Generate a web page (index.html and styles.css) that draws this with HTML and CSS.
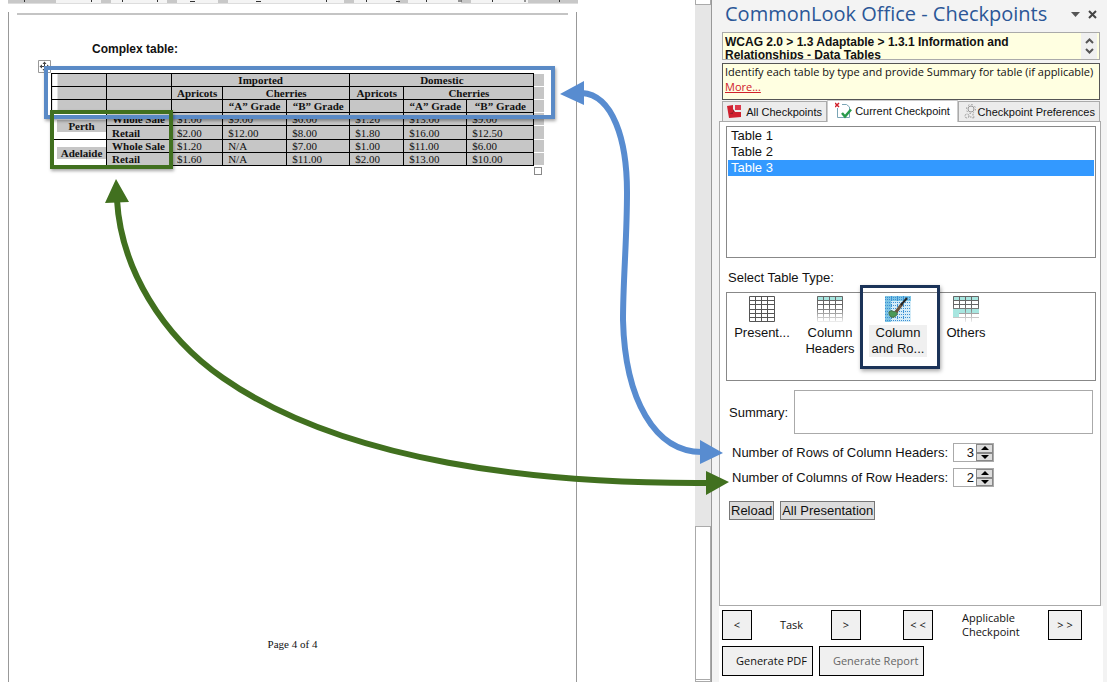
FILE: index.html
```
<!doctype html>
<html lang="en">
<head>
<meta charset="utf-8">
<title>CommonLook Office</title>
<link rel="stylesheet" href="styles.css">
</head>
<body>
<div class="app">

	<main class="doc">
		<svg class="strip" width="570" height="4">
			<path fill="#f4f4f4" d="M0 0h570v4H0z"/>
			<path fill="#c8c8c8" d="M0 0h48v3H0zM93 0h10v3H93zM159 0h10v3h-10zM210 0h10v3h-10zM336 0h10v3h-10zM390 0h10v3h-10zM453 0h10v3h-10zM520 0h50v3h-50z"/>
			<path stroke="#333" d="M16.500 0v2M83.500 0v2M114.500 0v2M149.500 0v2M318.500 0v2M358.500 0v2M418.500 0v2M484.500 0v2M551.500 0v2M182 1.500h5M248 1.500h5M388 1.500h4M450 1h4M516 1h2"/>
			<path stroke="#ddd" d="M0 3.500h570"/>
		</svg>
		<div class="page">
			<div class="rule"></div>
			<h1>Complex table:</h1>
			<div class="tableWrap">
				<svg class="moveHandle" width="13" height="13" viewBox="0 0 13 13">
					<path fill="#fff" stroke="#999" d="M.5.5h12v12H.5z"/>
					<path stroke="#444" d="M6.500 2v9M2 6.500h9"/>
					<path fill="#444" d="M4.500 4l2-2.500 2 2.500zM4.500 9l2 2.500 2-2.500zM4 4.500L1.500 6.500 4 8.500zM9 4.500l2.500 2L9 8.500z"/>
				</svg>
				<table class="prices">
					<colgroup><col class="c55"><col class="c65"><col class="c51"><col class="c64"><col class="c63"><col class="c54"><col class="c63"><col class="c67"><col class="c10"></colgroup>
					<tr><td class="first"></td><td></td><th colspan="3">Imported</th><th colspan="3">Domestic</th><td class="end"></td></tr>
					<tr><td class="first"></td><td></td><th>Apricots</th><th colspan="2">Cherries</th><th>Apricots</th><th colspan="2">Cherries</th><td class="end"></td></tr>
					<tr><td class="first"></td><td></td><td></td><th>“A” Grade</th><th>“B” Grade</th><td></td><th>“A” Grade</th><th>“B” Grade</th><td class="end"></td></tr>
					<tr><th class="group" rowspan="2"><span>Perth</span></th><th class="sub">Whole Sale</th><td>$1.00</td><td>$9.00</td><td>$6.00</td><td>$1.20</td><td>$13.00</td><td>$9.00</td><td class="end"></td></tr>
					<tr class="lastInGroup"><th class="sub">Retail</th><td>$2.00</td><td>$12.00</td><td>$8.00</td><td>$1.80</td><td>$16.00</td><td>$12.50</td><td class="end"></td></tr>
					<tr><th class="group" rowspan="2"><span>Adelaide</span></th><th class="sub">Whole Sale</th><td>$1.20</td><td>N/A</td><td>$7.00</td><td>$1.00</td><td>$11.00</td><td>$6.00</td><td class="end"></td></tr>
					<tr><th class="sub">Retail</th><td>$1.60</td><td>N/A</td><td>$11.00</td><td>$2.00</td><td>$13.00</td><td>$10.00</td><td class="end"></td></tr>
				</table>
				<div class="mark markBlue"></div>
				<div class="mark markGreen"></div>
				<div class="resizeHandle"></div>
			</div>
			<p class="pageNo">Page 4 of 4</p>
		</div>
	</main>

	<div class="scroll">
		<div class="scrollUp"></div>
		<div class="scrollThumb"></div>
		<div class="scrollDown"></div>
	</div>

	<aside class="panel">
		<header class="panelHead">
			<h2>CommonLook Office - Checkpoints</h2>
			<button class="headBtn" aria-label="Options"><svg width="9" height="5"><path fill="#555" d="M0 0h9L4.500 5z"/></svg></button>
			<button class="headBtn" aria-label="Close"><svg width="9" height="9"><path stroke="#444" stroke-width="2" d="M1 1l7 7M8 1L1 8"/></svg></button>
		</header>

		<div class="crumbs">
			<strong>WCAG 2.0 &gt; 1.3 Adaptable &gt; 1.3.1 Information and Relationships - Data Tables</strong>
			<div class="crumbScroll">
				<svg width="9" height="6"><path fill="none" stroke="#555" stroke-width="2" d="M1 5l3.500-3.500L8 5"/></svg>
				<svg width="9" height="6"><path fill="none" stroke="#555" stroke-width="2" d="M1 1l3.500 3.500L8 1"/></svg>
			</div>
		</div>
		<div class="hint">Identify each table by type and provide Summary for table (if applicable)<br><a href="#">More...</a></div>

		<div class="tabs" role="tablist">
			<button class="tab" role="tab">
				<svg width="15" height="13" viewBox="0 0 15 13"><path fill="#d0202f" d="M0 1l6-1v7h8v5L2 13z"/><path fill="#dc3a4c" d="M8 0h6v5H8z"/><path fill="#96202a" d="M6 4l2 3H6zM2 9l4-2v2z"/></svg>
				All Checkpoints
			</button>
			<button class="tab active" role="tab" aria-selected="true">
				<svg width="17" height="17" viewBox="0 0 17 17"><path fill="#fff" stroke="#7aa5b5" d="M2.500 6v9.500h12V5l-3-2.500H7"/><path stroke="#d0202a" stroke-width="1.500" d="M0 1l4 4M4 1L0 5"/><path fill="none" stroke="#2a9a4a" stroke-width="2.500" d="M7 11l3 3.500 6-7"/></svg>
				Current Checkpoint
			</button>
			<button class="tab" role="tab">
				<svg width="14" height="16" viewBox="0 0 14 16" fill="none" stroke="#999"><circle cx="8" cy="5" r="3"/><circle cx="8" cy="5" r="4.500" stroke-dasharray="1.500 2"/><circle cx="4" cy="12" r="2" stroke-dasharray="2 1"/><path stroke-dasharray="1.500 1.500" d="M10 10v5M7 13h6"/></svg>
				Checkpoint Preferences
			</button>
		</div>

		<section class="tabPage">
			<select class="tableList" size="8" aria-label="Tables">
				<option>Table 1</option>
				<option>Table 2</option>
				<option selected>Table 3</option>
			</select>

			<p class="typeLabel">Select Table Type:</p>
			<div class="types">
				<button class="type">
					<svg width="26" height="26" viewBox="0 0 26 26"><path fill="#fff" stroke="#555" d="M.5.5h25v25H.5zM6.500 0v26M12.500 0v26M18.500 0v26M0 4.500h26M0 8.500h26M0 13.500h26M0 17.500h26M0 21.500h26"/></svg>
					<span>Present...</span>
				</button>
				<button class="type">
					<svg width="26" height="26" viewBox="0 0 26 26">
						<defs><linearGradient id="fade" gradientUnits="userSpaceOnUse" x1="0" y1="0" x2="0" y2="26"><stop offset=".4" stop-color="#666"/><stop offset="1" stop-color="#eee"/></linearGradient></defs>
						<path fill="#a8e6e0" d="M0 0h26v5H0z"/><path fill="none" stroke="url(#fade)" d="M.5.5h25v25H.5zM6.500 0v26M12.500 0v26M18.500 0v26M0 4.500h26M0 8.500h26M0 13.500h26M0 17.500h26M0 21.500h26"/></svg>
					<span>Column Headers</span>
				</button>
				<button class="type selected">
					<svg width="26" height="26" viewBox="0 0 26 26">
						<path fill="#d4ecf8" d="M0 0h26v26H0z"/><path fill="#7cc4e4" d="M0 0h26v5H0zM0 0h6v26H0z"/>
						<path stroke="#3b8fd4" stroke-dasharray="1 1" d="M0 1.500h26M0 3.500h26M0 6.500h26M0 9.500h26M0 12.500h26M0 15.500h26M0 18.500h26M0 21.500h26M0 24.500h26M6.500 0v26M12.500 0v26M18.500 0v26"/>
						<path fill="#4a9a58" stroke="#4a6a40" d="M4 16c2-2 4-1 5 0l3-2c1 3 0 6-3 7-3 1-5-1-5-5z"/><path stroke="#6a5540" stroke-width="3" d="M11 16l6-8"/><path stroke="#222" stroke-width="2" d="M16 9l6-7"/></svg>
					<span>Column and Ro...</span>
				</button>
				<button class="type">
					<svg width="26" height="26" viewBox="0 0 26 26"><path fill="#a8e6e0" d="M0 0h26v5H0zM0 13h26v5H0zM0 18h6v4H0z"/><path fill="none" stroke="url(#fade)" d="M.5 13V.5h25V13M6.500 0v13M12.500 0v26M18.500 0v26M0 4.500h26M0 8.500h26M0 12.500h26M6 17.500h20M0 21.500h26"/></svg>
					<span>Others</span>
				</button>
			</div>

			<div class="summary">
				<label for="summary">Summary:</label>
				<textarea id="summary"></textarea>
			</div>
			<div class="count">
				<label for="rows">Number of Rows of Column Headers:</label>
				<div class="spin">
					<input id="rows" type="number" value="3">
					<div class="spinBtns">
						<button aria-label="More rows"><svg width="8" height="4"><path d="M0 4h8L4 0z"/></svg></button>
						<button aria-label="Fewer rows"><svg width="8" height="4"><path d="M0 0h8L4 4z"/></svg></button>
					</div>
				</div>
			</div>
			<div class="count">
				<label for="cols">Number of Columns of Row Headers:</label>
				<div class="spin">
					<input id="cols" type="number" value="2">
					<div class="spinBtns">
						<button aria-label="More columns"><svg width="8" height="4"><path d="M0 4h8L4 0z"/></svg></button>
						<button aria-label="Fewer columns"><svg width="8" height="4"><path d="M0 0h8L4 4z"/></svg></button>
					</div>
				</div>
			</div>
			<div class="actions">
				<button>Reload</button>
				<button>All Presentation</button>
			</div>
		</section>

		<footer class="foot">
			<div class="steps">
				<button class="flat" aria-label="Previous task">&lt;</button>
				<span class="task">Task</span>
				<button class="flat" aria-label="Next task">&gt;</button>
				<button class="flat back" aria-label="Previous checkpoint">&lt; &lt;</button>
				<span class="checkpoint">Applicable Checkpoint</span>
				<button class="flat wide" aria-label="Next checkpoint">&gt; &gt;</button>
			</div>
			<div class="reports">
				<button class="flat">Generate PDF</button>
				<button class="flat dim">Generate Report</button>
			</div>
		</footer>
	</aside>

	<svg class="arrows" width="1107" height="682" viewBox="0 0 1107 682">
		<path class="line blue" d="M582 93C613 95 627 140 627 192C627 240 623 280 623 320C625 400 655 452 702 452"/>
		<path class="tip blue" d="M560 94l24-13v24zM700 440v24l23-11z"/>
		<path class="line green" d="M117 200C121 268 162 336 223 378C345 463 540 484 708 483"/>
		<path class="tip green" d="M116 179l-11 24 24-1zM706 471v24l23-13z"/>
	</svg>
</div>
</body>
</html>
```
FILE: styles.css
```
*, *::after {
	box-sizing: border-box;
}
body {
	margin: 0;
	font-family: "Liberation Sans", Arial, sans-serif;
	font-size: 13px;
	color: #111;
	background: #fff;
}
h1, h2, p {
	margin: 0;
}
button, input, textarea, select {
	font: inherit;
	color: inherit;
	margin: 0;
	padding: 0;
	border-radius: 0;
}
svg {
	display: block;
	flex: none;
}
.app {
	display: flex;
	min-height: 100vh;
	position: relative;
	overflow: hidden;
}

/* document */
.doc {
	flex: 1;
	display: flex;
	flex-direction: column;
	padding-left: 8px;
}
.page {
	flex: 1;
	width: 569px;
	margin-top: 8px;
	border: solid #999;
	border-width: 0 1px;
	display: flex;
	flex-direction: column;
}
.rule {
	height: 2px;
	margin: 1px 8px 0;
	background: #c4c4c4;
}
h1 {
	margin: 26px 0 0 83px;
	font-size: 12px;
	line-height: 16px;
}
.tableWrap {
	position: relative;
	margin: 16px 0 0 42px;
	width: 493px;
}
.prices {
	width: 100%;
	table-layout: fixed;
	border-collapse: collapse;
	font: 11px/12px "Liberation Serif", "Times New Roman", serif;
}
.c10 { width: 10px; }
.c51 { width: 51px; }
.c54 { width: 54px; }
.c55 { width: 55px; }
.c63 { width: 63px; }
.c64 { width: 64px; }
.c65 { width: 65px; }
.c67 { width: 67px; }
.prices td, .prices th {
	height: 13px;
	padding: 0 0 0 5px;
	border: 1px solid #000;
	background: #c6c6c6;
	white-space: nowrap;
}
.prices .lastInGroup td, .prices .lastInGroup th {
	height: 14px;
}
.prices th {
	padding: 0;
}
.prices .sub {
	padding-left: 5px;
	text-align: left;
}
.prices .first {
	background: linear-gradient(to right, #fff 5px, #c6c6c6 5px);
}
.prices .group {
	background: #fff;
	padding-left: 5px;
}
.group span {
	display: block;
	background: #c6c6c6;
}
.prices .end {
	border: solid #fff;
	border-width: 1px 0 1px 1px;
	border-left-color: #000;
}
.mark {
	position: absolute;
	border: 4px solid #5a8ac6;
	box-shadow: 1px 2px 3px rgba(0, 0, 0, .35);
}
.markBlue {
	top: -7px;
	left: -7px;
	width: 511px;
	height: 53px;
}
.markGreen {
	top: 37px;
	left: -1px;
	width: 123px;
	height: 59px;
	border-color: #41701f;
}
.moveHandle {
	position: absolute;
	left: -13px;
	top: -13px;
}
.resizeHandle {
	position: absolute;
	right: 2px;
	bottom: -9px;
	width: 8px;
	height: 8px;
	border: 1px solid #888;
}
.pageNo {
	margin: auto 0 30px;
	font: 11px/16px "Liberation Serif", "Times New Roman", serif;
	text-align: center;
}

/* scrollbar */
.scroll {
	width: 16px;
	background: #e6e6e6;
	display: flex;
	flex-direction: column;
}
.scrollUp, .scrollDown, .scrollThumb {
	height: 5px;
	background: #fff;
	border: 1px solid #aaa;
}
.scrollUp, .scrollDown {
	border-top: 0;
}
.scrollThumb {
	height: 154px;
	margin-top: auto;
}
.scrollDown {
	height: 2px;
}

/* task pane */
.panel {
	width: 396px;
	display: flex;
	flex-direction: column;
	padding: 0 6px 0 7px;
	border-left: 1px solid #999;
	background: #f3f3f3;
}
.panelHead {
	display: flex;
	align-items: center;
	height: 32px;
	padding: 0 4px 4px 6px;
}
.panelHead h2 {
	flex: 1;
	font: 20px/28px "Open Sans", sans-serif;
	color: #2b5797;
	white-space: nowrap;
}
.headBtn {
	border: 0;
	background: none;
	margin-left: 8px;
}
.crumbs {
	display: flex;
	justify-content: space-between;
	height: 28px;
	margin: 0 1px 3px 3px;
	padding: 0 2px;
	border: 1px solid #aaa;
	background: #ffffe1;
	font-size: 12px;
	line-height: 13px;
}
.crumbs strong {
	width: 320px;
	height: 23px;
	margin-top: 3px;
	overflow: hidden;
}
.crumbScroll {
	width: 16px;
	display: flex;
	flex-direction: column;
	justify-content: space-evenly;
	align-items: center;
	background: #f0f0f0;
}
.hint {
	height: 37px;
	margin: 0 1px 0 3px;
	padding: 0 2px;
	border: 1px solid #555;
	background: #ffffe1;
	font: 11px/15px "Open Sans", sans-serif;
	white-space: nowrap;
}
.hint a {
	color: #d0202a;
}
.tabs {
	display: flex;
	align-items: flex-end;
	height: 21px;
	padding: 0 1px 0 3px;
}
.tab {
	flex: 105 1 0;
	height: 20px;
	display: flex;
	align-items: center;
	justify-content: space-between;
	padding: 0 4px;
	border: 1px solid #aaa;
	border-bottom: 0;
	background: #ececec;
	font-size: 11px;
	white-space: nowrap;
}
.tab:last-child {
	flex-grow: 146;
}
.tab.active {
	flex-grow: 127;
	height: 22px;
	padding: 0 7px 2px;
	margin-bottom: -1px;
	border-color: #ccc;
	background: #fff;
	z-index: 1;
}
.tabPage {
	flex: 1;
	padding: 4px 4px 0 6px;
	border: 1px solid #aaa;
	background: #fff;
}
.tableList {
	appearance: none;
	display: block;
	width: 100%;
	height: 132px;
	padding: 1px;
	border: 1px solid #888;
	background: #fff;
	outline: 0;
	overflow: hidden;
}
.tableList option {
	height: 16px;
	min-height: 16px;
	padding: 0 3px;
	line-height: 16px;
}
.tableList option:checked {
	color: #fff;
	background: #3399ff linear-gradient(#3399ff, #3399ff);
}
.typeLabel {
	margin: 12px 2px 6px;
	line-height: 16px;
}
.types {
	display: flex;
	height: 89px;
	padding: 1px;
	border: 1px solid #888;
}
.type {
	position: relative;
	width: 68px;
	height: 70px;
	padding: 0;
	border: 0;
	background: none;
	display: flex;
	flex-direction: column;
	align-items: center;
	line-height: 16px;
}
.type svg {
	margin: 2px 0 3px;
}
.type.selected span {
	width: 58px;
	background: #f0f0f0;
}
.type.selected::after {
	content: "";
	position: absolute;
	top: -9px;
	left: -4px;
	width: 80px;
	height: 84px;
	border: 3px solid #1b3358;
	box-shadow: 1px 2px 4px rgba(0, 0, 0, .35);
}
.summary {
	display: flex;
	align-items: center;
	gap: 6px;
	margin: 9px 3px 9px;
}
.summary textarea {
	flex: 1;
	height: 44px;
	border: 1px solid #aaa;
	resize: none;
}
.count {
	display: flex;
	align-items: center;
	gap: 5px;
	margin: 0 0 6px 6px;
}
.spin {
	display: flex;
	width: 41px;
	height: 19px;
	border: 1px solid #aaa;
}
.spin input {
	flex: 1;
	width: 0;
	border: 0;
	padding-right: 2px;
	text-align: right;
	appearance: textfield;
}
.spin input::-webkit-inner-spin-button {
	appearance: none;
}
.spinBtns {
	width: 17px;
	display: flex;
	flex-direction: column;
}
.spinBtns button {
	flex: 1;
	display: flex;
	align-items: center;
	justify-content: center;
	border: 1px solid #888;
	background: #ddd;
}
.actions {
	display: flex;
	gap: 6px;
	margin: 14px 3px;
}
.actions button {
	height: 19px;
	padding: 0 1px;
	border: 1px solid #777;
	background: #ddd;
}
.foot {
	padding: 4px 3px 6px;
	margin-right: -2px;
	background: #fff;
	font: 11px/14px "Open Sans", sans-serif;
}
.steps, .reports {
	display: flex;
	align-items: center;
}
.reports {
	gap: 6px;
	margin-top: 6px;
}
.flat {
	min-width: 30px;
	height: 30px;
	border: 1px solid #000;
	background: #f0f0f0;
}
.reports .flat {
	padding: 0 5px 0 13px;
}
.reports .dim {
	color: #666;
}
.wide {
	width: 34px;
}
.task {
	width: 79px;
	text-align: center;
}
.back {
	margin-left: 42px;
}
.checkpoint {
	width: 86px;
	margin-left: 29px;
	padding-right: 20px;
}

/* callout arrows over both panes */
.arrows {
	position: absolute;
	top: 0;
	left: 0;
	pointer-events: none;
}
.line {
	fill: none;
	stroke-width: 6;
}
.line.blue { stroke: #588cd0; }
.line.green { stroke: #41701f; }
.tip.blue { fill: #588cd0; }
.tip.green { fill: #41701f; }
```
